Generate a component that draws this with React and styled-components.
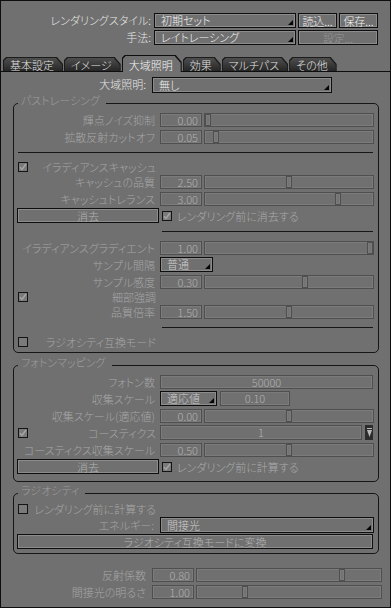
import React from 'react';
import styled, { createGlobalStyle, css } from 'styled-components';

const GlobalStyle = createGlobalStyle`
  html, body {
    margin: 0;
    padding: 0;
    background: #707070;
  }
  body {
    font-family: "Noto Sans CJK JP", "Noto Sans", sans-serif;
    font-size: 11px;
    font-weight: 300;
    font-feature-settings: "palt";
  }
`;

const frame = css`
  box-sizing: border-box;
  border: 1px solid #0e0e0e;
  box-shadow: inset 0 0 0 1px #8c8c8c;
`;

const sunken = css`
  box-sizing: border-box;
  border: 1px solid #4f4f4f;
  box-shadow: inset 0 0 0 1px #7b7b7b;
`;

const Window = styled.div`
  box-sizing: border-box;
  width: 391px;
  height: 608px;
  padding-top: 12px;
  border: 1px solid #0e0e0e;
  background: #707070;
  color: #a6a6a6;
  line-height: 14px;
`;

const StyleGrid = styled.div`
  display: grid;
  grid-template-columns: 151px 142px 39px 39px;
  grid-auto-rows: 15px;
  gap: 2px;
`;

const TopLabel = styled.div`
  padding-right: 1px;
  color: #e6e6e6;
  text-align: right;
  line-height: 15px;
  white-space: nowrap;
`;

const Select = styled.div`
  ${frame};
  display: flex;
  height: ${(p) => p.$h || 15}px;
  width: ${(p) => (p.$w ? `${p.$w}px` : 'auto')};
  flex: ${(p) => (p.$w ? 'none' : 1)};
  padding: 0 2px 0 6px;
  color: ${(p) => (p.$dim ? '#cdcdcd' : '#f2f2f2')};
  white-space: nowrap;
`;

const SelectText = styled.span`
  flex: 1;
  line-height: ${(p) => p.$h - 2}px;
`;

const CaretIcon = styled.svg`
  align-self: flex-end;
  margin-bottom: 2px;
  flex: none;
`;

const Caret = () => (
  <CaretIcon width="5" height="5" viewBox="0 0 5 5">
    <polygon points="5,0 5,5 0,5" fill="#050505" />
  </CaretIcon>
);

const Dropdown = ({ children, h = 15, w, dim }) => (
  <Select $h={h} $w={w} $dim={dim}>
    <SelectText $h={h}>{children}</SelectText>
    <Caret />
  </Select>
);

const Button = styled.div`
  ${frame};
  display: flex;
  align-items: center;
  justify-content: center;
  height: 15px;
  color: ${(p) => (p.$disabled ? '#979797' : p.$dim ? '#b2b2b2' : '#f2f2f2')};
  white-space: nowrap;
  ${(p) => p.$span && `grid-column: ${p.$span};`}
  ${(p) => p.$wide && 'margin: 0 1px 0 -1px;'}
`;

const TabStrip = styled.div`
  display: flex;
  align-items: flex-end;
  height: 16px;
  margin-top: 10px;
  padding-left: 2px;
  border-bottom: 1px solid #0e0e0e;
`;

const tabShape = 'polygon(0 3px, 3px 0, calc(100% - 6px) 0, 100% 7px, 100% 100%, 0 100%)';

const Tab = styled.div`
  box-sizing: border-box;
  display: flex;
  height: ${(p) => (p.$active ? 17 : 14)}px;
  margin: 0 1px ${(p) => (p.$active ? -1 : 0)}px 0;
  padding: 1px 1px 0 1px;
  background: ${(p) => (p.$active ? '#0e0e0e' : '#1c1c1c')};
  clip-path: ${tabShape};
`;

const TabFace = styled.div`
  display: flex;
  align-items: center;
  padding: ${(p) => (p.$active ? '1px 8px 0 6px' : '0 8px 0 6px')};
  background: ${(p) => (p.$active ? '#707070' : 'linear-gradient(#4e4e4e, #262626)')};
  color: ${(p) => (p.$active ? '#f6f6f6' : '#e2e2e2')};
  clip-path: ${tabShape};
  white-space: nowrap;
`;

const GIRow = styled.div`
  display: grid;
  grid-template-columns: 146px 180px;
  column-gap: 5px;
  height: 16px;
  margin-top: 5px;
`;

const Group = styled.fieldset`
  min-inline-size: 0;
  margin: ${(p) => p.$mt}px 11px 0 12px;
  padding: 0 4px ${(p) => p.$pb}px 4px;
  border: 1px solid #161616;
  border-radius: 5px;
`;

const Legend = styled.legend`
  padding: 0 6px 5px 3px;
  color: #9e9e9e;
  line-height: 11px;
`;

const Row = styled.div`
  display: grid;
  grid-template-columns: ${(p) => p.$label || 142}px 1fr;
  align-items: center;
  height: ${(p) => p.$h || 17}px;
  ${(p) => p.$outside && 'margin-right: 8px;'}
`;

const Label = styled.div`
  padding-right: ${(p) => (p.$pad === undefined ? 5 : p.$pad)}px;
  color: #a6a6a6;
  text-align: right;
  white-space: nowrap;
`;

const CheckLabel = styled.label`
  display: flex;
  align-items: center;
  justify-content: space-between;
  padding-right: 4px;
  color: #a6a6a6;
  white-space: nowrap;
`;

const InlineCheck = styled.label`
  display: flex;
  align-items: center;
  gap: 5px;
  padding-left: 2px;
  color: #aaaaaa;
  white-space: nowrap;
`;

const Box = styled.span`
  box-sizing: border-box;
  display: inline-flex;
  align-items: center;
  justify-content: center;
  width: 10px;
  height: 10px;
  border: 1px solid #141414;
  background: #7a7a7a;
  flex: none;
`;

const CheckBox = ({ checked }) => (
  <Box>
    {checked && (
      <svg width="8" height="8" viewBox="0 0 8 8">
        <polyline points="1,4.2 3,6.5 7,1" fill="none" stroke="#a6a6a6" strokeWidth="1.4" />
      </svg>
    )}
  </Box>
);

const Controls = styled.div`
  display: flex;
  align-items: center;
  gap: ${(p) => p.$gap || 2}px;
  height: ${(p) => p.$h || 14}px;
`;

const Field = styled.div`
  ${sunken};
  width: ${(p) => (p.$w ? `${p.$w}px` : 'auto')};
  flex: ${(p) => (p.$w ? 'none' : 1)};
  height: 100%;
  padding: 0 3px;
  color: #b0b0b0;
  text-align: ${(p) => (p.$center ? 'center' : 'right')};
  line-height: 12px;
  ${(p) => p.$trim && 'margin-right: 1px;'}
`;

const Track = styled.div`
  ${sunken};
  position: relative;
  flex: 1;
  height: 100%;
`;

const Thumb = styled.div`
  ${sunken};
  position: absolute;
  top: 0;
  width: 6px;
  height: 12px;
  background: #747474;
`;

const Spin = styled.div`
  display: flex;
  align-items: center;
  justify-content: center;
  width: 8px;
  height: 15px;
  margin-right: 1px;
  background: #2c2c2c;
  flex: none;
`;

const Rule = styled.hr`
  height: 0;
  margin: 7px 1px 7px ${(p) => p.$indent || 0}px;
  border: 0;
  border-top: 1px solid #161616;
`;

const Bottom = styled.div`
  margin-top: 12px;
`;

const Slider = ({ value, pos }) => (
  <Controls>
    <Field $w={42}>{value}</Field>
    <Track>
      <Thumb style={{ left: `calc(${pos} * (100% - 6px))` }} />
    </Track>
  </Controls>
);

const SliderRow = ({ label, value, pos }) => (
  <Row>
    <Label>{label}</Label>
    <Slider value={value} pos={pos} />
  </Row>
);

const CheckRow = ({ label, checked, h = 13 }) => (
  <Row $h={h}>
    <CheckLabel>
      <CheckBox checked={checked} />
      <span>{label}</span>
    </CheckLabel>
  </Row>
);

const tabs = ['基本設定', 'イメージ', '大域照明', '効果', 'マルチパス', 'その他'];

export default function App() {
  return (
    <>
      <GlobalStyle />
      <Window>
        <StyleGrid>
          <TopLabel>レンダリングスタイル:</TopLabel>
          <Dropdown>初期セット</Dropdown>
          <Button>読込...</Button>
          <Button>保存...</Button>
          <TopLabel>手法:</TopLabel>
          <Dropdown>レイトレーシング</Dropdown>
          <Button $disabled $span="span 2">設定...</Button>
        </StyleGrid>

        <TabStrip>
          {tabs.map((t) => (
            <Tab key={t} $active={t === '大域照明'}>
              <TabFace $active={t === '大域照明'}>{t}</TabFace>
            </Tab>
          ))}
        </TabStrip>

        <GIRow>
          <TopLabel>大域照明:</TopLabel>
          <Dropdown h={16}>無し</Dropdown>
        </GIRow>

        <Group $mt={2} $pb={4}>
          <Legend>パストレーシング</Legend>
          <SliderRow label="輝点ノイズ抑制" value="0.00" pos={0} />
          <SliderRow label="拡散反射カットオフ" value="0.05" pos={0.05} />
          <Rule />
          <CheckRow label="イラディアンスキャッシュ" checked />
          <SliderRow label="キャッシュの品質" value="2.50" pos={0.5} />
          <SliderRow label="キャッシュトレランス" value="3.00" pos={0.8} />
          <Row>
            <Button $dim $wide>消去</Button>
            <InlineCheck>
              <CheckBox checked />
              レンダリング前に消去する
            </InlineCheck>
          </Row>
          <Rule $indent={144} />
          <SliderRow label="イラディアンスグラディエント" value="1.00" pos={1} />
          <Row>
            <Label>サンプル間隔</Label>
            <Controls $h={15}>
              <Dropdown w={53} dim>普通</Dropdown>
            </Controls>
          </Row>
          <SliderRow label="サンプル感度" value="0.30" pos={0.6} />
          <CheckRow label="細部強調" checked />
          <SliderRow label="品質倍率" value="1.50" pos={0.5} />
          <Rule $indent={144} />
          <CheckRow label="ラジオシティ互換モード" />
        </Group>

        <Group $mt={4} $pb={6}>
          <Legend>フォトンマッピング</Legend>
          <Row>
            <Label>フォトン数</Label>
            <Controls>
              <Field $center $trim>50000</Field>
            </Controls>
          </Row>
          <Row>
            <Label>収集スケール</Label>
            <Controls $gap={3} $h={15}>
              <Dropdown w={57} dim>適応値</Dropdown>
              <Field $w={70} $center>0.10</Field>
            </Controls>
          </Row>
          <SliderRow label="収集スケール(適応値)" value="0.00" pos={0.5} />
          <Row>
            <CheckLabel>
              <CheckBox checked />
              <span>コースティクス</span>
            </CheckLabel>
            <Controls $gap={3} $h={15}>
              <Field $center>1</Field>
              <Spin>
                <svg width="5" height="9" viewBox="0 0 5 9">
                  <rect x="0" y="0" width="5" height="1" fill="#b8b8b8" />
                  <polygon points="0,2 5,2 2.5,9" fill="#b8b8b8" />
                </svg>
              </Spin>
            </Controls>
          </Row>
          <SliderRow label="コースティクス収集スケール" value="0.50" pos={0.5} />
          <Row>
            <Button $dim $wide>消去</Button>
            <InlineCheck>
              <CheckBox checked />
              レンダリング前に計算する
            </InlineCheck>
          </Row>
        </Group>

        <Group $mt={3} $pb={3}>
          <Legend>ラジオシティ</Legend>
          <CheckRow label="レンダリング前に計算する" h={15} />
          <Row>
            <Label $pad={6}>エネルギー:</Label>
            <Controls $h={16}>
              <Dropdown h={16} dim>間接光</Dropdown>
            </Controls>
          </Row>
          <Row>
            <Button $dim $wide $span="1 / -1">ラジオシティ互換モードに変換</Button>
          </Row>
        </Group>

        <Bottom>
          <Row $label={151} $outside>
            <Label $pad={6}>反射係数</Label>
            <Slider value="0.80" pos={0.8} />
          </Row>
          <Row $label={151} $outside>
            <Label $pad={6}>間接光の明るさ</Label>
            <Slider value="1.00" pos={0.25} />
          </Row>
        </Bottom>
      </Window>
    </>
  );
}
